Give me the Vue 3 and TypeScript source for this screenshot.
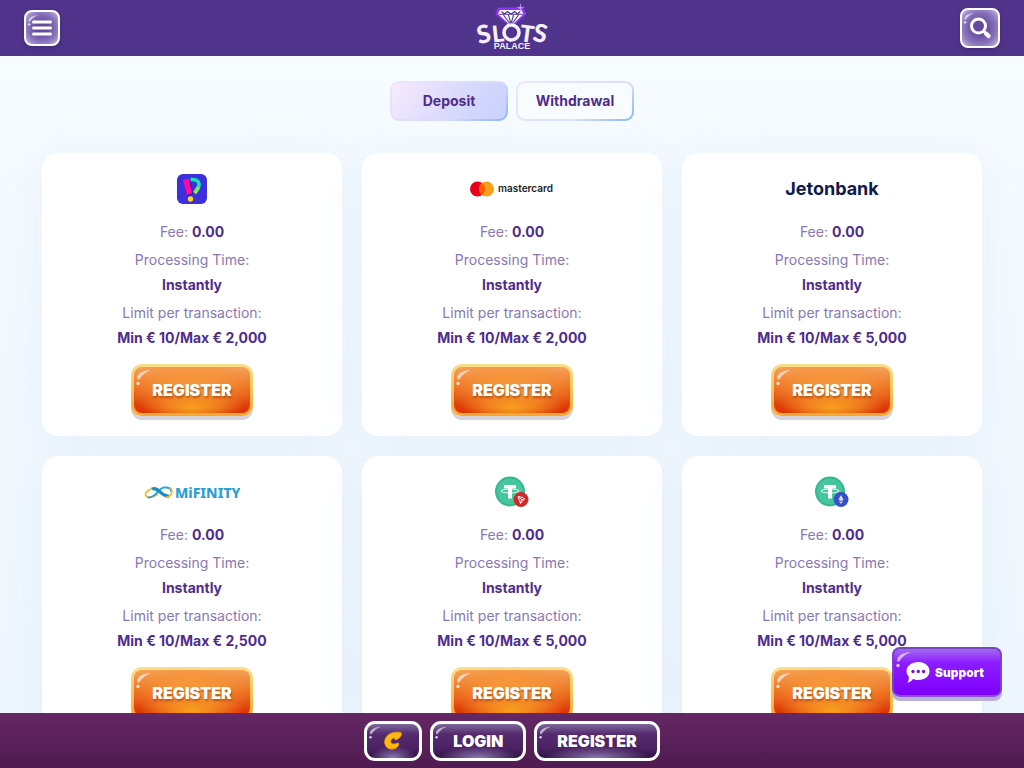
<script setup lang="ts">
import { h, ref } from 'vue'

type Logo = 'perfect' | 'mastercard' | 'jeton' | 'mifinity' | 'tron' | 'ether'

interface Method {
  logo: Logo
  name: string
  max: string
}

const tabs = ['Deposit', 'Withdrawal']
const activeTab = ref('Deposit')

const methods: Method[] = [
  { logo: 'perfect', name: 'Instant pay', max: '2,000' },
  { logo: 'mastercard', name: 'Mastercard', max: '2,000' },
  { logo: 'jeton', name: 'Jetonbank', max: '5,000' },
  { logo: 'mifinity', name: 'MiFinity', max: '2,500' },
  { logo: 'tron', name: 'Tether TRC20', max: '5,000' },
  { logo: 'ether', name: 'Tether ERC20', max: '5,000' },
]

// Curved highlight in the top left corner of the glossy buttons
const Gloss = () =>
  h('svg', { class: 'gloss', viewBox: '0 0 20 18', 'aria-hidden': 'true' }, [
    h('path', { d: 'M2 10 Q2 2 16 1 Q10 3 6 8 Q4 12 2 10Z', fill: '#fff', opacity: '0.6' }),
    h('circle', { cx: 3, cy: 14.5, r: 1.7, fill: '#fff', opacity: '0.75' }),
  ])
</script>

<template>
  <div class="page">
    <header class="header">
      <button class="icon-btn menu" type="button" aria-label="Menu">
        <Gloss />
        <svg viewBox="0 0 20 16" width="20" height="16">
          <path d="M1.5 2H18.5M1.5 8H18.5M1.5 14H18.5" stroke="#fff" stroke-width="3" stroke-linecap="round" />
        </svg>
      </button>
      <a class="brand" href="#" aria-label="Slots Palace">
        <svg viewBox="0 0 80 54" width="80" height="54">
          <path d="M26 6.500H51L54.500 13L39.500 27L23 13Z" fill="#8a35f2" />
          <path d="M28 9H49.500L51.500 13L39 25L26 13Z" fill="#fff" />
          <path d="M29.500 10.500L32.500 13L35.500 10.500L39 13L42.500 10.500L45.500 13L48 10.500M27 13.200H51M31.500 14L39 24L46.500 14M36.500 14L39 23L41.500 14" fill="none" stroke="#50348c" stroke-width="1.100" />
          <path d="M48.500 2L49.200 6L53 6.700L49.200 7.500L48.500 12L47.700 7.500L44 6.700L47.700 6Z" fill="#c99aff" />
          <g class="slots">
            <text x="5" y="42" font-size="25" transform="rotate(-12 12 34)">S</text>
            <text x="20" y="41" font-size="23" transform="rotate(-6 26 34)">L</text>
            <text x="48" y="41" font-size="23" transform="rotate(8 54 34)">T</text>
            <text x="61" y="41" font-size="25" transform="rotate(12 67 34)">S</text>
          </g>
          <circle cx="39.500" cy="31.500" r="7.500" fill="#50348c" stroke="#f4efff" stroke-width="3.600" />
          <text class="palace" x="40" y="48" text-anchor="middle">PALACE</text>
        </svg>
      </a>
      <button class="icon-btn search" type="button" aria-label="Search">
        <Gloss />
        <svg viewBox="0 0 24 24" width="24" height="24">
          <circle cx="10.500" cy="10" r="7" fill="none" stroke="#fff" stroke-width="3" />
          <path d="M15.500 15L17 16.500" stroke="#fff" stroke-width="2.500" />
          <path d="M18 17.500L20.500 20" stroke="#fff" stroke-width="4.200" stroke-linecap="round" />
        </svg>
      </button>
    </header>

    <main class="content">
      <div class="tabs" role="tablist">
        <button
          v-for="tab in tabs"
          :key="tab"
          type="button"
          role="tab"
          class="tab"
          :class="{ active: tab === activeTab }"
          :aria-selected="tab === activeTab"
          @click="activeTab = tab"
        >{{ tab }}</button>
      </div>

      <div class="grid">
        <article v-for="m in methods" :key="m.logo" class="card" :aria-label="m.name">
          <div class="logo">
            <svg v-if="m.logo === 'perfect'" viewBox="0 0 30 30" width="30" height="30">
              <rect width="30" height="30" rx="6" fill="#3d2fdc" />
              <path d="M7 7L13 6L16 20L10.500 22Z" fill="#24177f" />
              <path d="M6 6L12 5L15 19.500L10 21Z" fill="#ff08a8" />
              <path d="M13.500 5.500Q22 5 22 10.500Q22 14 18 19" fill="none" stroke="#16e3b4" stroke-width="3.600" />
              <path d="M21.300 13Q20 16 17.500 19" fill="none" stroke="#83ea55" stroke-width="3.600" />
              <circle cx="13.500" cy="25" r="2.700" fill="#ffdc12" />
            </svg>
            <svg v-else-if="m.logo === 'mastercard'" viewBox="2 0 88 30" width="88" height="30">
              <circle cx="11.500" cy="15" r="7.500" fill="#eb001b" />
              <circle cx="20.500" cy="15" r="7.500" fill="#f79e1b" />
              <path d="M16 9A7.500 7.500 0 0 1 16 21A7.500 7.500 0 0 1 16 9Z" fill="#ff5f00" />
              <text class="mc-text" x="32" y="18">mastercard</text>
            </svg>
            <svg v-else-if="m.logo === 'jeton'" viewBox="0 0 100 30" width="100" height="30">
              <text class="jeton-text" x="50" y="21" text-anchor="middle">Jetonbank</text>
            </svg>
            <svg v-else-if="m.logo === 'mifinity'" viewBox="0 0 96 30" width="96" height="30">
              <path d="M14 12.500C8 9 1 15 1.500 18C3 22 10 20 14 17" fill="none" stroke="#f5b71d" stroke-width="1.800" />
              <path d="M4 20.500C12 21.500 14 11 20 10.500C25 10 28 12 27 15" fill="none" stroke="#29a8df" stroke-width="2" />
              <path d="M8 12C14 9 17 20 25 19" fill="none" stroke="#178fc6" stroke-width="3.200" />
              <path d="M22 20C27 20 30 14 26 11" fill="none" stroke="#f5b71d" stroke-width="1.600" />
              <text class="mif-text" x="31" y="21">MiFINITY</text>
            </svg>
            <svg v-else viewBox="0 0 36 32" width="36" height="32">
              <circle cx="16" cy="15.500" r="15" fill="#35b78f" />
              <circle cx="16" cy="15.500" r="13" fill="#45c69c" />
              <path d="M10 9H22V12.500H18V22.500H14V12.500H10Z" fill="#fff" />
              <ellipse cx="16" cy="15" rx="9" ry="2" fill="none" stroke="#fff" stroke-width="0.900" />
              <template v-if="m.logo === 'tron'">
                <circle cx="27" cy="23.500" r="7.500" fill="#cf2a2a" />
                <path d="M24 20.500L29 21.500L30.500 23L26.500 27.500ZM24 20.500L27.500 23.500L30.500 23M27.500 23.500L26.500 27.500" fill="none" stroke="#fff" stroke-width="0.900" />
              </template>
              <template v-else>
                <circle cx="27" cy="23.500" r="7.500" fill="#3650c8" />
                <path d="M27 19L29.500 23.500L27 25L24.500 23.500ZM24.500 24.500L27 26L29.500 24.500L27 28Z" fill="#d4ddff" />
              </template>
            </svg>
          </div>
          <p class="line">Fee: <b>0.00</b></p>
          <p class="line">Processing Time:<b class="value">Instantly</b></p>
          <p class="line">Limit per transaction:<b class="value">Min € 10/Max € {{ m.max }}</b></p>
          <button type="button" class="register"><Gloss />REGISTER</button>
        </article>
      </div>
    </main>

    <button type="button" class="support">
      <Gloss />
      <svg viewBox="0 0 24 22" width="24" height="22">
        <path d="M12.500 1C19 1 23.500 5 23.500 10C23.500 15.500 19 19 12.500 19C10 19 8.500 18.500 7 18C5.500 20 3.500 21.500 1.500 21.500C2.800 19.500 3 17.500 2.700 15.500C1 13.500 .5 12 .5 10C.5 5 5.500 1 12.500 1Z" fill="#fff" />
        <circle cx="7" cy="10.500" r="1.700" fill="#7a12e8" />
        <circle cx="12.300" cy="10.500" r="1.700" fill="#7a12e8" />
        <circle cx="17.600" cy="10.500" r="1.700" fill="#7a12e8" />
      </svg>
      <span>Support</span>
    </button>

    <footer class="footer">
      <button type="button" class="foot-btn coin" aria-label="Promotions">
        <Gloss />
        <svg viewBox="0 0 20 20" width="20" height="20">
          <path d="M17.500 1.500C14 .8 8 1 4.500 4.500C1 8 .8 13 3.500 16C7 19.500 13.500 18.500 15.500 14.500C16.300 13 16 12 14.500 12C12 13.500 9 13.500 8 11.500C7 9 9.500 6.500 12 7C11.500 8 12 9 13 9C15.500 8 18 5.500 18.500 3.500C18.700 2.500 18.300 1.700 17.500 1.500Z" fill="#ffb90d" stroke="#e8960a" stroke-width="0.800" />
        </svg>
      </button>
      <button type="button" class="foot-btn"><Gloss />LOGIN</button>
      <button type="button" class="foot-btn"><Gloss />REGISTER</button>
    </footer>
  </div>
</template>

<style>
body {
  margin: 0;
}
</style>

<style scoped>
.page {
  display: flex;
  flex-direction: column;
  height: 100vh;
  background: linear-gradient(#f7fcff, #f2f8fe 50%, #eef6fd);
  font-family: Inter, Roboto, sans-serif;
  font-size: 14px;
  color: #4f2d8c;
}

button {
  position: relative;
  display: flex;
  align-items: center;
  justify-content: center;
  box-sizing: border-box;
  margin: 0;
  padding: 0;
  border: 0;
  color: inherit;
  font-family: inherit;
  cursor: pointer;
}

svg {
  display: block;
  flex: none;
}

.gloss {
  position: absolute;
  top: 2px;
  left: 1px;
  width: 20px;
  height: 18px;
}

.header {
  display: flex;
  flex: none;
  align-items: center;
  justify-content: space-between;
  height: 56px;
  padding: 0 24px;
  background: #50348c;
}

.brand {
  margin-right: -4px;
}

.slots {
  fill: #f4efff;
  font-family: Lato, sans-serif;
  font-weight: 900;
}

.palace {
  fill: #f4efff;
  font-family: "Liberation Sans", sans-serif;
  font-size: 9px;
  font-weight: 700;
}

.icon-btn {
  border: 2px solid #fff;
  border-radius: 8px;
  background: radial-gradient(circle, #65499f 25%, #8b75bd 65%, #c7bbe4);
  box-shadow: 0 2px 4px #33216180;
}

.icon-btn .gloss {
  width: 14px;
  height: 13px;
}

.menu {
  width: 36px;
  height: 36px;
}

.search {
  width: 40px;
  height: 40px;
}

.content {
  flex: 1;
  min-height: 0;
  overflow-y: auto;
  scrollbar-width: none;
  padding: 25px 42px;
}

.tabs {
  display: flex;
  justify-content: center;
  gap: 8px;
  margin-bottom: 32px;
}

.tab {
  width: 118px;
  height: 40px;
  padding-bottom: 2px;
  border: 2px solid transparent;
  border-radius: 9px;
  background:
    linear-gradient(#f8fcff, #f8fcff) padding-box,
    linear-gradient(145deg, #f0e6fc, #d9dffd 65%, #86b5f8) border-box;
  font-size: 14px;
  font-weight: 700;
}

.tab.active {
  background:
    linear-gradient(125deg, #f7ebfc, #d9d9fd 55%, #c8d1fe) padding-box,
    linear-gradient(145deg, #efe4fa, #d5dafd 65%, #86b5f8) border-box;
}

.grid {
  display: grid;
  grid-template-columns: repeat(3, 1fr);
  gap: 20px;
}

.card {
  display: flex;
  flex-direction: column;
  align-items: center;
  padding: 20px;
  border-radius: 16px;
  background: #fff;
  box-shadow: 0 4px 40px #b8d5ee2e;
}

.logo {
  display: flex;
  align-items: center;
  height: 32px;
  margin-bottom: 14px;
}

.mc-text {
  fill: #1c1c1c;
  font-family: Inter, sans-serif;
  font-size: 10px;
  font-weight: 600;
}

.jeton-text {
  fill: #101a4a;
  font-family: Inter, sans-serif;
  font-size: 18px;
  font-weight: 700;
}

.mif-text {
  fill: #2b9ed6;
  font-family: "Noto Sans", sans-serif;
  font-size: 14px;
  font-weight: 800;
}

.line {
  margin: 0 0 3px;
  color: #8978b3;
  line-height: 25px;
  text-align: center;
}

.line b {
  color: #4f2d8c;
  font-weight: 700;
}

.value {
  display: block;
}

.register {
  width: 122px;
  height: 52px;
  margin-top: 11px;
  border: 3px solid transparent;
  border-radius: 11px;
  background:
    radial-gradient(ellipse 45% 35% at 50% 88%, #f9a01f, #f9a01f00) padding-box,
    radial-gradient(ellipse 60% 75% at 50% 35%, #f7953a 20%, #f7953a00) padding-box,
    linear-gradient(#f3a563, #ec6a1c 45%, #d92f03) padding-box,
    linear-gradient(#fae08a, #fba52b) border-box;
  box-shadow: 0 4px 0 #d6d3dc;
  color: #fff;
  font-size: 16px;
  font-weight: 900;
  text-shadow: 1px 2px 2px #9a3c0a99;
}

.support {
  position: fixed;
  right: 22px;
  bottom: 71px;
  gap: 5px;
  width: 110px;
  height: 50px;
  padding-right: 4px;
  border: 2px solid #7745bd;
  border-bottom-color: #8a4ee0;
  border-radius: 8px;
  background: linear-gradient(#a46aee, #8c1cff 30%, #8000ff);
  box-shadow: 0 4px 0 #b9b0dc;
  color: #fff;
  font-size: 12px;
  font-weight: 900;
}

.footer {
  display: flex;
  flex: none;
  justify-content: center;
  gap: 8px;
  box-sizing: border-box;
  height: 55px;
  padding-top: 8px;
  background: linear-gradient(#652765, #4f1b50);
}

.foot-btn {
  height: 40px;
  padding: 0 20px;
  border: 3px solid #fff;
  border-radius: 11px;
  background:
    radial-gradient(ellipse 45% 35% at 50% 100%, #8d79b4, #8d79b400),
    linear-gradient(#7c6899, #552a70 30%, #4c2264 70%, #301242);
  color: #fff;
  font-size: 16px;
  font-weight: 900;
}

.foot-btn .gloss {
  width: 16px;
  height: 14px;
}

.coin {
  padding: 0 16px;
}
</style>
